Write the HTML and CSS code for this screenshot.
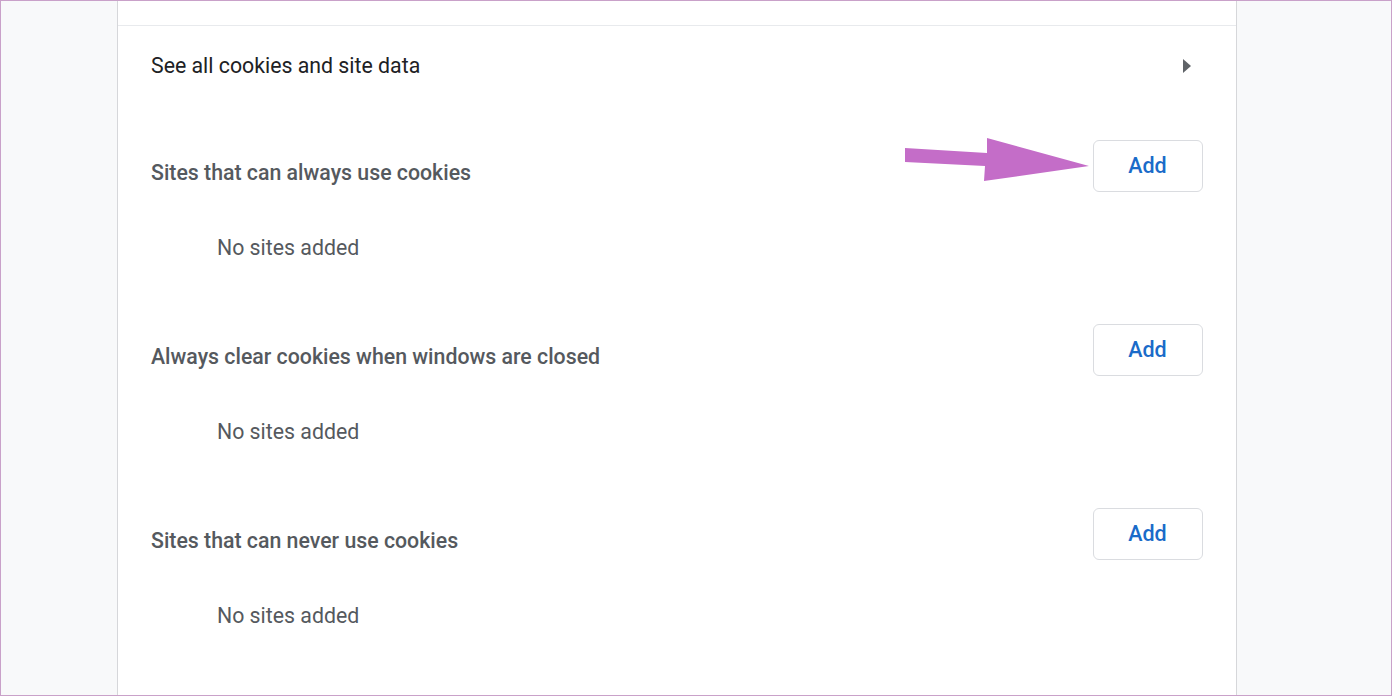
FILE: index.html
```html
<!DOCTYPE html>
<html lang="en">
<head>
<meta charset="utf-8">
<title>Cookies settings</title>
<link rel="stylesheet" href="styles.css">
</head>
<body>
<div class="frame">
  <main class="card">
    <div class="card-top"></div>
    <div class="link-row">
      <span class="link-label">See all cookies and site data</span>
      <span class="chevron" aria-hidden="true"></span>
    </div>

    <section class="site-list">
      <div class="list-header">
        <h2 class="list-title">Sites that can always use cookies</h2>
        <button class="add-btn">Add</button>
      </div>
      <p class="empty">No sites added</p>
    </section>

    <section class="site-list">
      <div class="list-header">
        <h2 class="list-title">Always clear cookies when windows are closed</h2>
        <button class="add-btn">Add</button>
      </div>
      <p class="empty">No sites added</p>
    </section>

    <section class="site-list">
      <div class="list-header">
        <h2 class="list-title">Sites that can never use cookies</h2>
        <button class="add-btn">Add</button>
      </div>
      <p class="empty">No sites added</p>
    </section>
  </main>

  <svg class="annotation" width="200" height="60" viewBox="900 130 200 60" aria-hidden="true">
    <polygon points="905,148 987,153 987,138 1089,166 984,181 985,166 905,162" fill="#c46dc8"/>
  </svg>
</div>
</body>
</html>
```

FILE: styles.css
```css
* { box-sizing: border-box; }

html, body {
  margin: 0;
  padding: 0;
  background: #ffffff;
}

body {
  font-family: Roboto, "Liberation Sans", Arial, sans-serif;
}

.frame {
  position: relative;
  width: 1392px;
  height: 696px;
  border: 1px solid #c9a1c9;
  background: #f8f9fa;
  display: flex;
  overflow: hidden;
}

.card {
  margin-left: 116px;
  width: 1120px;
  height: 100%;
  background: #ffffff;
  border-left: 1px solid #d6d7da;
  border-right: 1px solid #d6d7da;
  display: flex;
  flex-direction: column;
}

.card-top {
  height: 25px;
  border-bottom: 1px solid #e8eaed;
  flex: none;
}

.link-row {
  height: 78px;
  flex: none;
  display: flex;
  align-items: center;
  justify-content: space-between;
  padding: 2px 45px 0 33px;
}

.link-label {
  font-size: 21.3px;
  line-height: 24px;
  color: #202124;
}

.chevron {
  width: 0;
  height: 0;
  border-top: 7px solid transparent;
  border-bottom: 7px solid transparent;
  border-left: 8px solid #5f6368;
}

.site-list {
  padding: 36px 33px 28px 33px;
  flex: none;
}

.list-header {
  display: flex;
  justify-content: space-between;
  align-items: flex-start;
}

.list-title {
  margin: 21px 0 0 0;
  font-size: 21.3px;
  line-height: 24px;
  font-weight: 500;
  color: #55595e;
}

.add-btn {
  width: 110px;
  height: 52px;
  border: 1px solid #dadce0;
  border-radius: 6px;
  background: #ffffff;
  color: #1a6bc9;
  font-family: Roboto, "Liberation Sans", Arial, sans-serif;
  font-size: 21.5px;
  font-weight: 500;
  padding: 0 1px 2px 0;
  cursor: pointer;
}

.empty {
  margin: 44px 0 0 66px;
  font-size: 21.3px;
  line-height: 24px;
  color: #55595e;
}

.annotation {
  position: absolute;
  left: 899px;
  top: 129px;
}
```
